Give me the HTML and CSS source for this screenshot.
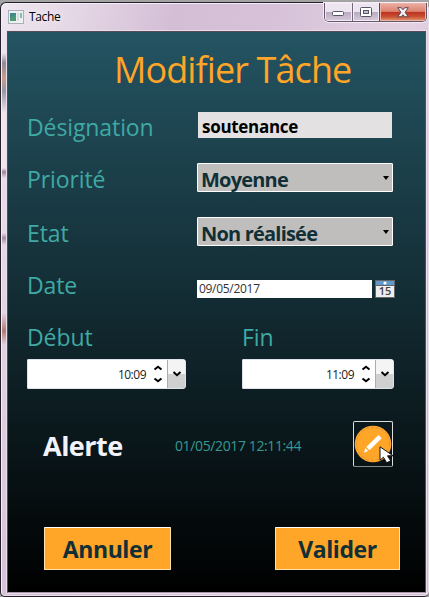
FILE: index.html
```
<!DOCTYPE html>
<html lang="fr">
<head>
<meta charset="utf-8">
<title>Tache</title>
<link rel="stylesheet" href="styles.css">
</head>
<body>
<div class="window">
  <header class="titlebar">
    <svg class="app-icon" width="16" height="14" viewBox="0 0 16 14"><rect x=".5" y=".5" width="15" height="13" fill="#eef0f2" stroke="#a9b0b8"/><rect x="2" y="3" width="6" height="8" fill="#3d8a8c"/><path d="M2 8l6-4v7H2z" fill="#4c9a78"/><rect x="9" y="3" width="2" height="8" fill="#d9dde0"/><rect x="12" y="3" width="2" height="5" fill="#7fc0a8"/></svg>
    <span class="caption">Tache</span>
    <div class="controls">
      <span class="ctl ctl-min"><svg width="13" height="6"><rect x=".5" y=".5" width="11" height="4" rx="1" fill="#fff" stroke="#555568"/></svg></span>
      <span class="ctl ctl-max"><svg width="12" height="10"><rect x=".5" y=".5" width="11" height="9" rx="1" fill="#fff" stroke="#555568"/><rect x="3.5" y="3.5" width="5" height="3" fill="#c6bccb" stroke="#555568"/></svg></span>
      <span class="ctl ctl-close"><svg width="12" height="11" viewBox="0 0 12 11"><path d="M.7.7h3.6L6 2.8 7.700.7h3.600L8.100 5.300l3.200 4.500H7.700L6 7.700 4.300 9.800H.7l3.200-4.500z" fill="#f4f2f5" stroke="#5a4654"/></svg></span>
    </div>
  </header>
  <main class="client">
    <h1 class="title"><span>Modifier Tâche</span></h1>
    <div class="row row-name"><label class="label">Désignation</label><div class="textbox">soutenance</div></div>
    <div class="row row-prio"><label class="label">Priorité</label><div class="combo"><span>Moyenne</span><i class="tri"></i></div></div>
    <div class="row row-state"><label class="label">Etat</label><div class="combo"><span>Non réalisée</span><i class="tri"></i></div></div>
    <div class="row row-date"><label class="label">Date</label><div class="datebox">09/05/2017</div>
      <svg class="calendar" width="20" height="18" viewBox="0 0 20 18"><rect width="20" height="18" fill="#656565"/><rect x="1" y="1" width="18" height="4" fill="#6299cc"/><circle cx="10" cy="3" r="1.600" fill="#fff"/><rect x="1" y="6" width="18" height="11" fill="#eee"/><text x="10" y="15.200" text-anchor="middle" class="cal-day">15</text></svg>
    </div>
    <div class="times">
      <div class="time"><label class="label">Début</label>
        <div class="timebox start"><span>10:09</span><svg class="spin" width="10" height="20" viewBox="0 0 10 20"><path d="M1.500 5.500L5 2.700l3.500 2.800M1.500 14.500L5 17.300l3.500-2.800"/></svg><span class="drop"><svg width="10" height="6" viewBox="0 0 10 6"><path d="M1.500 1L5 4.200 8.500 1"/></svg></span></div>
      </div>
      <div class="time"><label class="label">Fin</label>
        <div class="timebox end"><span>11:09</span><svg class="spin" width="10" height="20" viewBox="0 0 10 20"><path d="M1.500 5.500L5 2.700l3.500 2.800M1.500 14.500L5 17.300l3.500-2.800"/></svg><span class="drop"><svg width="10" height="6" viewBox="0 0 10 6"><path d="M1.500 1L5 4.200 8.500 1"/></svg></span></div>
      </div>
    </div>
    <div class="alert">
      <strong class="alert-label">Alerte</strong>
      <span class="alert-date">01/05/2017 12:11:44</span>
      <div class="edit">
        <svg width="38" height="44" viewBox="0 0 38 44"><circle cx="19" cy="22" r="18.300" fill="#ffa527"/><circle cx="19" cy="22" r="16.500" fill="none" stroke="#cf9149" stroke-width=".8" stroke-dasharray="3 2"/><path d="M24.500 13l3.200 3.200L15.500 28.200l-3.300-3.200zM11.300 26l3 3-4.500 1.700z" fill="#fff"/></svg>
        <svg class="pointer" width="17" height="18" viewBox="0 0 17 18"><path d="M1 .8v13.400l3.400-3 3.300 5.600 4-2-3.200-5h5.700z" fill="#fff" stroke="#111"/></svg>
      </div>
    </div>
    <div class="actions"><button class="btn cancel">Annuler</button><button class="btn ok">Valider</button></div>
  </main>
</div>
</body>
</html>
```
FILE: styles.css
```
* { box-sizing: border-box; }
body {
  margin: 0;
  width: 429px;
  height: 597px;
  overflow: hidden;
  background: #a3a3a3;
  font-family: "Open Sans", "Noto Sans", sans-serif;
}
.window {
  height: 595px;
  margin-top: 2px;
  border: 1px solid #25202a;
  border-right: 0;
  border-radius: 6px 6px 5px 5px;
  box-shadow: inset 1px 1px 0 #f5eef6, inset -1px -1px 0 #eadfea;
  padding: 0 2px 4px 6px;
  background:
    linear-gradient(180deg, transparent 0 50px, #8c8c98 60px, #c99d8c 75px, #9697a5 88px, #f0e4ee 110px 165px, #9d8399 169px, transparent 175px 230px, #a38ba2 235px, transparent 242px 310px, #b17b72 328px, transparent 342px 570px) 0 0 / 7px 100% no-repeat,
    linear-gradient(105deg, #eee6f0 0, #e5d8e6 70px, #d4bed6 170px, #d6c1d8 260px, #e2d1e2 400px, #d5bcd3 520px);
}
.titlebar { display: flex; align-items: flex-start; height: 28px; }
.app-icon { margin: 7px 0 0 1px; }
.caption { margin: 5px 0 0 5px; font-size: 12px; line-height: 17px; color: #000; letter-spacing: -.35px; text-shadow: 0 0 6px #fff; }
.controls {
  display: flex;
  width: 103px;
  height: 19px;
  margin-left: auto;
  border: 1px solid #625667;
  border-top: 0;
  border-radius: 0 0 5px 5px;
  overflow: hidden;
  box-shadow: 0 0 0 1px #f4ebf4;
}
.ctl { display: flex; align-items: center; justify-content: center; background: linear-gradient(#ece5ef 0 48%, #b8abc0 50%, #d7cadb); box-shadow: inset 0 0 0 1px #f3ebf5; }
.ctl-min { width: 28px; padding-top: 4px; border-right: 1px solid #756a79; }
.ctl-max { width: 27px; border-right: 1px solid #6b3c40; }
.ctl-close { flex: 1; background: linear-gradient(#eab0a4 0, #dc8270 47%, #bb301d 50%, #c94f31 75%, #e19b78); box-shadow: inset 0 0 0 1px #edb3a6; }
.client {
  display: flex;
  flex-direction: column;
  width: 419px;
  height: 562px;
  border: 1px solid #574d5a;
  border-bottom-color: #a794a6;
  box-shadow: 0 0 0 1px #ebdcea;
  background: linear-gradient(#245462, #000);
}
.title { margin: 0; height: 66px; padding-left: 106px; color: #ffa527; font-size: 36px; font-weight: 400; line-height: 75px; letter-spacing: -.9px; white-space: nowrap; }
.row { display: flex; padding-left: 19px; }
.label { width: 170px; color: #3fa9a4; font-size: 23px; line-height: 33px; letter-spacing: -.1px; white-space: nowrap; }
.row-name { height: 54px; padding-top: 14px; }
.row-prio { height: 52px; padding-top: 11px; }
.row-state { height: 56px; padding-top: 13px; }
.row-date { height: 58px; padding-top: 20px; }
.row-name .label { width: 171px; margin-top: -1px; }
.row-date .label { margin-top: -11px; }
.textbox { width: 194px; height: 26px; padding-left: 4px; background: #e3e1e1; color: #000; font-size: 17px; font-weight: 700; line-height: 30px; letter-spacing: -.3px; }
.combo { display: flex; justify-content: space-between; width: 196px; height: 29px; padding: 0 3px; border: 1px solid #fff; border-radius: 1px; background: #bfbebc; color: #102f36; font-size: 20px; font-weight: 700; line-height: 32px; letter-spacing: -.8px; }
.tri { margin-top: 12px; width: 0; height: 0; border: 3.5px solid transparent; border-top: 4px solid #000; }
.datebox { width: 175px; height: 18px; padding-left: 2px; background: #fff; color: #333; font-size: 12px; line-height: 17px; letter-spacing: -.3px; }
.calendar { margin-left: 3px; }
.cal-day { font-size: 11px; font-weight: 600; fill: #444; }
.times { display: flex; height: 72px; padding-left: 19px; }
.time { flex: 0 0 215px; }
.time + .time { flex-basis: 152px; }
.time .label { display: block; height: 41px; padding-top: 3px; }
.timebox { display: flex; align-items: center; justify-content: flex-end; height: 30px; border: 1px solid #dfe2ee; border-radius: 1px 3px 3px 1px; background: #fff; color: #222; font-size: 12px; letter-spacing: -.5px; }
.start { width: 159px; }
.end { width: 152px; }
.timebox path { fill: none; stroke: #000; stroke-width: 2; }
.spin { margin: 0 4px 0 7px; }
.drop { display: flex; align-items: center; justify-content: center; width: 18px; height: 28px; border-left: 1px solid #a9acb4; background: linear-gradient(#f4f4f4 50%, #d0d0d0 50%); }
.alert { display: flex; align-items: center; height: 108px; padding-left: 35px; }
.alert-label { width: 132px; padding-top: 4px; color: #f2f2fa; font-size: 27px; line-height: 36px; letter-spacing: -.5px; }
.alert-date { width: 178px; padding-top: 3px; color: #359b92; font-size: 14px; letter-spacing: -.38px; white-space: nowrap; }
.edit { position: relative; width: 40px; height: 46px; border: 1px solid #ddd; border-bottom-color: #888; border-radius: 2px; }
.edit svg { display: block; }
.edit .pointer { position: absolute; left: 25px; top: 24px; }
.actions { display: flex; justify-content: space-between; padding: 29px 25px 0 36px; }
.btn { height: 43px; padding: 2px 0 0; border: 1px solid #ffe2b0; border-top-color: #fff; border-radius: 1px; background: #ffa527; color: #102f36; font: 700 23px/39px "Open Sans", sans-serif; letter-spacing: -.4px; }
.cancel { width: 127px; }
.ok { width: 125px; }
```
